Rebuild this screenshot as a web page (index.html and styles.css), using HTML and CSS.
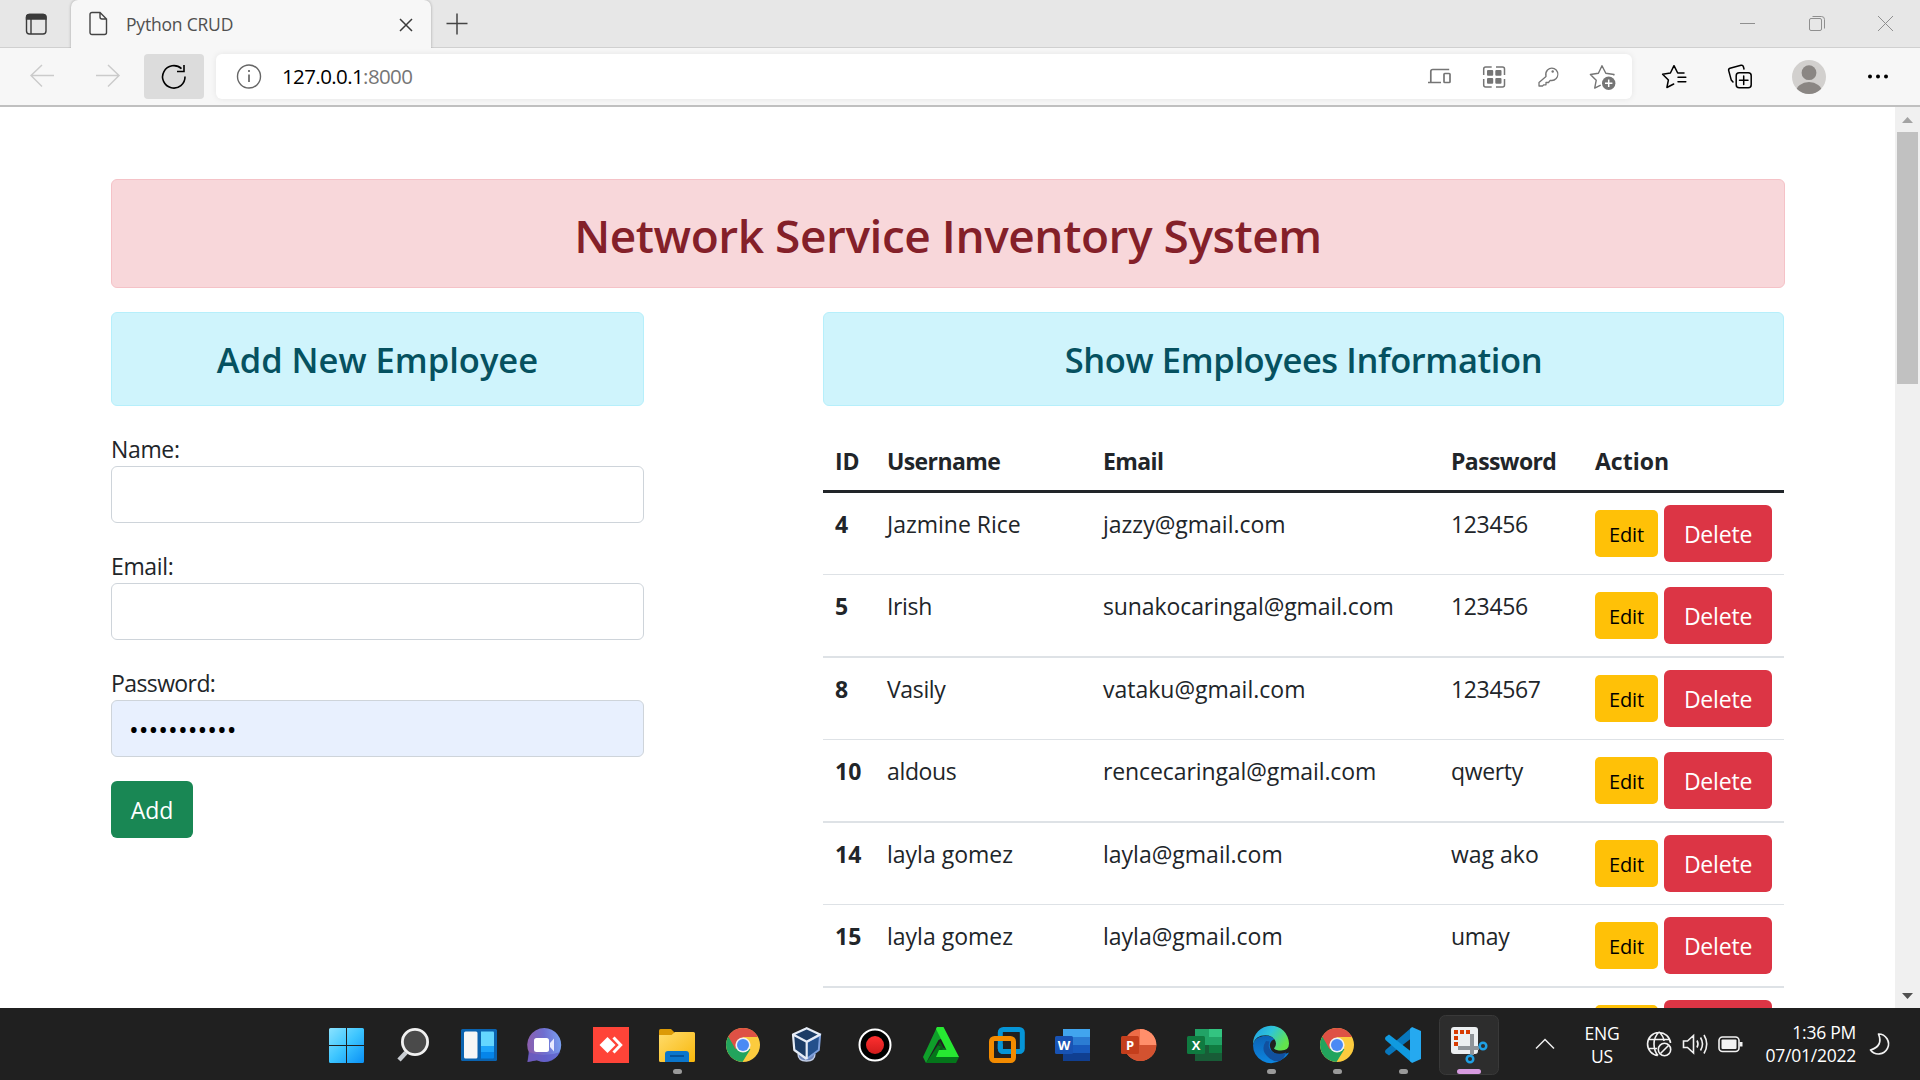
FILE: index.html
```html
<!DOCTYPE html>
<html lang="en">
<head>
<meta charset="utf-8">
<title>Python CRUD</title>
<link rel="stylesheet" href="styles.css">
</head>
<body>
<svg class="defs" aria-hidden="true">
  <defs>
    <linearGradient id="win" gradientUnits="userSpaceOnUse" x1="13" y1="20" x2="48" y2="55"><stop offset="0" stop-color="#8be3ff"/><stop offset=".5" stop-color="#3cc5ff"/><stop offset="1" stop-color="#0a90f5"/></linearGradient>
    <linearGradient id="chat" x1="0" y1="0.3" x2="1" y2="0.2"><stop offset="0" stop-color="#8b5fae"/><stop offset=".5" stop-color="#6f6fd0"/><stop offset="1" stop-color="#7aa2f2"/></linearGradient>
    <linearGradient id="folder" x1="0" y1="0" x2="1" y2="1"><stop offset="0" stop-color="#ffdc6c"/><stop offset="1" stop-color="#f8b70b"/></linearGradient>
    <linearGradient id="rec" x1="0" y1="0" x2="0" y2="1"><stop offset="0" stop-color="#ff3030"/><stop offset="1" stop-color="#d01c1c"/></linearGradient>
    <linearGradient id="edgeTop" x1="0" y1="0" x2="1" y2="0.5"><stop offset="0" stop-color="#1d9be8"/><stop offset=".5" stop-color="#2fc5d8"/><stop offset="1" stop-color="#62e34c"/></linearGradient>
    <linearGradient id="edgeBody" x1="0" y1="0" x2="0" y2="1"><stop offset="0" stop-color="#0c62b5"/><stop offset="1" stop-color="#0d86e0"/></linearGradient>
    <symbol id="chrome" viewBox="0 0 60 72">
      <circle cx="31" cy="37" r="17" fill="#fccb3e"/>
      <path d="M31 37 16.300 28.500A17 17 0 0 0 30.500 54L38.400 41.200Z" fill="#22a45d"/>
      <path d="M16.300 28.500A17 17 0 0 1 46 29H31L23.600 41.200Z" fill="#de5145"/>
      <circle cx="31" cy="37" r="7.600" fill="#f1f1f1"/><circle cx="31" cy="37" r="6" fill="#4a8af4"/>
    </symbol>
  </defs>
</svg>

<header class="tabstrip">
  <svg class="tab-actions" width="71" height="48" fill="none" stroke="#3b3b3b" stroke-width="1.400"><rect x="26.500" y="14.500" width="19.500" height="19.500" rx="3"/><path d="M26.500 19v-1.500a3 3 0 0 1 3-3h13.500a3 3 0 0 1 3 3V19z" fill="#3b3b3b"/><path d="M31 19v15"/></svg>
  <div class="tab">
    <svg class="tab-file" width="20" height="26" fill="none" stroke="#444" stroke-width="1.400"><path d="M3.500 1.500H11L17.500 8v13.500a2 2 0 0 1-2 2H3a2 2 0 0 1-2-2V3.500a2 2 0 0 1 2-2zM11 1.500V6a2 2 0 0 0 2 2h4.500"/></svg>
    <span class="tab-title">Python CRUD</span>
    <svg class="tab-close" width="14" height="14" stroke="#3b3b3b" stroke-width="1.500"><path d="M1 1l12 12M13 1 1 13"/></svg>
  </div>
  <svg class="new-tab" width="22" height="22" stroke="#444" stroke-width="1.500"><path d="M11 .5v21M.5 10.500h21"/></svg>
  <div class="window-buttons">
    <svg width="69" height="48"><path d="M27 23.500h15" stroke="#8f8f8f"/></svg>
    <svg width="69" height="48" fill="none" stroke="#8f8f8f"><rect x="27.500" y="18.500" width="12" height="12" rx="1.500"/><path d="M30.500 16.500h9a3 3 0 0 1 3 3v9"/></svg>
    <svg width="69" height="48" stroke="#8f8f8f"><path d="m27 16 15 15m0-15L27 31"/></svg>
  </div>
</header>

<nav class="toolbar">
  <svg class="nav-arrow" width="66" height="45" fill="none" stroke="#cbcbcb" stroke-width="1.500"><path d="M24 21.500H1M12 11 1 21.500 12 32.500"/></svg>
  <svg class="nav-arrow" width="48" height="45" fill="none" stroke="#cbcbcb" stroke-width="1.500"><path d="M0 21.500h23M12 11l11 10.500L12 32.500"/></svg>
  <div class="reload"><svg width="60" height="45" fill="none" stroke="#000" stroke-width="1.600"><path d="M41 22.500a11.200 11.200 0 1 1-3.500-7.800M40 11v6.500h-7"/></svg></div>
  <div class="address">
    <svg class="info" width="26" height="45" fill="none" stroke="#666" stroke-width="1.400"><circle cx="13" cy="22.500" r="11.500"/><path d="M13 20.500v7.500M13 16v2" stroke-width="1.700"/></svg>
    <span class="url"><span class="host">127.0.0.1</span><span class="port">:8000</span></span>
    <div class="address-icons">
      <svg viewBox="0 0 36 45" fill="none" stroke="#757575" stroke-width="1.700"><path d="M8.800 28V17.500a2 2 0 0 1 2-2h16.400M6 28.500h13"/><rect x="22" y="19.500" width="6" height="9" rx=".8"/></svg>
      <svg viewBox="0 0 36 45" fill="none" stroke="#757575" stroke-width="1.500"><path d="M7.700 21v-6a2 2 0 0 1 2-2h6M20 13h6.500a2 2 0 0 1 2 2v6M28.500 25v6a2 2 0 0 1-2 2H20M15.700 33h-6a2 2 0 0 1-2-2v-6"/><g fill="#757575" stroke="none"><rect x="11" y="16" width="6.200" height="5.800" rx="1"/><rect x="19.300" y="16" width="6.200" height="5.800" rx="1"/><rect x="11" y="24" width="6.200" height="5.800" rx="1"/><rect x="19.300" y="24" width="6.200" height="5.800" rx="1"/></g></svg>
      <svg viewBox="0 0 36 45" fill="none" stroke="#757575" stroke-width="1.300"><path d="M16 22.500a7 7 0 0 1 1.500-6.500 6.200 6.200 0 0 1 8.700 0 6.500 6.500 0 0 1 0 8.500 6.200 6.200 0 0 1-6 1.800L18.500 28.500H16v2.300h-2.200L12.500 32H9v-3.500z" stroke-linejoin="round"/><circle cx="22.700" cy="17.500" r="1.200" fill="#757575" stroke="none"/></svg>
      <svg viewBox="0 0 36 45" fill="none" stroke="#757575" stroke-width="1.400" stroke-linejoin="round"><path d="m29.500 21.500.5-1-8.200-1.200L18 11.700l-3.600 7.600-8 1.200 5.800 5.800-1.500 7.800 6-3"/><circle cx="24.700" cy="29.300" r="6.700" fill="#757575" stroke="none"/><path d="M21 29.300h7.400M24.700 25.600V33" stroke="#fff" stroke-width="1.500"/></svg>
    </div>
  </div>
  <div class="browser-icons">
    <svg viewBox="0 0 36 45" fill="none" stroke="#000" stroke-width="1.500" stroke-linejoin="round" stroke-linecap="round"><path d="M28 19h-6.300L18 11.700l-3.600 7.300-7.800 1.200 5.800 5.800-1.500 7.500 6.800-3.500M22 23.200h7.800M22 27.800h7.800"/></svg>
    <svg viewBox="0 0 36 45" fill="none" stroke="#000" stroke-width="1.500" stroke-linecap="round"><rect x="14.200" y="18.800" width="15" height="15" rx="3"/><path d="M21.700 22v8.500M17.500 26.300H26M22 15l-.6-2.300a2 2 0 0 0-2.400-1.400L8 14.200a2 2 0 0 0-1.300 2.400l2.600 9.500L11 28"/></svg>
    <svg class="avatar" viewBox="0 0 36 45"><clipPath id="av"><circle cx="18" cy="23" r="17"/></clipPath><circle cx="18" cy="23" r="17" fill="#d2d0ce"/><g clip-path="url(#av)" fill="#8a8683"><circle cx="18" cy="18.700" r="7.400"/><ellipse cx="18" cy="38" rx="13" ry="10"/></g></svg>
    <svg class="more" viewBox="0 0 36 45"><circle cx="10" cy="22.500" r="2"/><circle cx="18" cy="22.500" r="2"/><circle cx="26" cy="22.500" r="2"/></svg>
  </div>
</nav>

<div class="viewport">
  <main class="page">
    <h1 class="alert alert-danger">Network Service Inventory System</h1>
    <div class="columns">
      <section class="add">
        <h2 class="alert alert-info">Add New Employee</h2>
        <label>Name:</label>
        <div class="field"></div>
        <label>Email:</label>
        <div class="field"></div>
        <label class="tight">Password:</label>
        <div class="field filled">•••••••••••</div>
        <button class="btn btn-success">Add</button>
      </section>
      <section class="show">
        <h2 class="alert alert-info wide">Show Employees Information</h2>
        <table>
          <colgroup><col class="c-id"><col class="c-user"><col class="c-mail"><col class="c-pass"><col class="c-act"></colgroup>
          <thead><tr><th>ID</th><th class="tight">Username</th><th class="tight">Email</th><th class="tight">Password</th><th>Action</th></tr></thead>
          <tbody>
            <tr><th>4</th><td>Jazmine Rice</td><td>jazzy@gmail.com</td><td class="num">123456</td><td><div class="actions"><button class="btn btn-warning">Edit</button><button class="btn btn-danger">Delete</button></div></td></tr>
            <tr><th>5</th><td class="num">Irish</td><td class="long">sunakocaringal@gmail.com</td><td class="num">123456</td><td><div class="actions"><button class="btn btn-warning">Edit</button><button class="btn btn-danger">Delete</button></div></td></tr>
            <tr><th>8</th><td class="num">Vasily</td><td>vataku@gmail.com</td><td class="num">1234567</td><td><div class="actions"><button class="btn btn-warning">Edit</button><button class="btn btn-danger">Delete</button></div></td></tr>
            <tr><th>10</th><td class="num">aldous</td><td class="long">rencecaringal@gmail.com</td><td class="num">qwerty</td><td><div class="actions"><button class="btn btn-warning">Edit</button><button class="btn btn-danger">Delete</button></div></td></tr>
            <tr><th>14</th><td>layla gomez</td><td>layla@gmail.com</td><td>wag ako</td><td><div class="actions"><button class="btn btn-warning">Edit</button><button class="btn btn-danger">Delete</button></div></td></tr>
            <tr><th>15</th><td>layla gomez</td><td>layla@gmail.com</td><td class="num">umay</td><td><div class="actions"><button class="btn btn-warning">Edit</button><button class="btn btn-danger">Delete</button></div></td></tr>
            <tr><th></th><td></td><td></td><td></td><td><div class="actions"><button class="btn btn-warning"></button><button class="btn btn-danger"></button></div></td></tr>
          </tbody>
        </table>
      </section>
    </div>
  </main>
  <aside class="scrollbar">
    <svg width="25" height="25"><path d="M7 16h11l-5.500-6z" fill="#a3a3a3"/></svg>
    <div class="thumb"></div>
    <svg class="down" width="25" height="25"><path d="M7 10h11l-5.500 6z" fill="#505050"/></svg>
  </aside>
</div>

<footer class="taskbar">
  <div class="apps">
    <svg viewBox="0 0 60 72"><path d="M14.500 20H30v17H13V21.500A1.500 1.500 0 0 1 14.500 20zM31 20h15.500a1.500 1.500 0 0 1 1.500 1.500V37H31zM13 38h17v17H14.500a1.500 1.500 0 0 1-1.500-1.500zM31 38h17v15.500a1.500 1.500 0 0 1-1.500 1.500H31z" fill="url(#win)"/></svg>
    <svg viewBox="0 0 60 72"><path d="M24 44.500 17 52" stroke="#c9cdd2" stroke-width="4.500"/><circle cx="33" cy="34" r="12.600" fill="#4a4a4a" stroke="#f1f1f1" stroke-width="2.800"/></svg>
    <svg viewBox="0 0 60 72"><rect x="13" y="21" width="36" height="32" rx="1.500" fill="#0a63b0"/><rect x="16" y="23.500" width="13.500" height="27" rx="1.500" fill="#f6f6f6"/><path d="M33 23.500h12a1 1 0 0 1 1 1V38H33z" fill="#64d6ff"/><path d="M33 38h13v6H33z" fill="#1da4fa"/><path d="M33 44h13v5.500a1 1 0 0 1-1 1H33z" fill="#0585ea"/></svg>
    <svg viewBox="0 0 60 72"><path d="M30.300 20a17 17 0 1 1-7.500 32.300L13.500 54l1.700-9A17 17 0 0 1 30.300 20z" fill="url(#chat)"/><path d="M14.500 44q15 6 32 0Q40 54 31 54q-4 0-8-1.700L13.500 54z" fill="#5a57c6" opacity=".6"/><rect x="20" y="30" width="15" height="14" rx="2.500" fill="#fff"/><path d="m36 35 4-4.500v13L36 39z" fill="#e9ebff"/></svg>
    <svg viewBox="0 0 60 72"><path d="M13 19h36v36H13z" fill="#ff4438"/><path d="m19.500 37 8-8 8 8-8 8z" fill="#fff"/><path d="m33.500 29.500 7.200 7.500-7.200 7.500" fill="none" stroke="#fff" stroke-width="3"/></svg>
    <svg viewBox="0 0 60 72"><path d="M13 22.500a1.500 1.500 0 0 1 1.500-1.500H25l3.500 3.500V30H13z" fill="#dc9a06"/><path d="M13 27h12.500l3.500-3h18.500a1.500 1.500 0 0 1 1.500 1.500v27a1.500 1.500 0 0 1-1.500 1.500h-33a1.500 1.500 0 0 1-1.500-1.500z" fill="url(#folder)"/><path d="M19 54v-8a3 3 0 0 1 3-3h18a3 3 0 0 1 3 3v8z" fill="#0b76cc"/><path d="M24 48h14" stroke="#04498a" stroke-width="1.500"/><rect class="dot" x="27" y="61" width="9" height="5" rx="2.500"/></svg>
    <svg viewBox="0 0 60 72"><use href="#chrome"/></svg>
    <svg viewBox="0 0 60 72"><path d="M20 46q0 7 8.500 7t8.500-7" fill="#6f86b8" stroke="#c3cfe8" stroke-width="1.300"/><path d="m28.700 20 13.400 6.500-1.300 15.500-12.100 8.500L16.300 42 15 26.500z" fill="#1c3c66"/><path d="m28.700 34 13.400-7-1.300 15-12.100 9" fill="#23508c" stroke="#7d9fdb" stroke-width="2"/><path d="M28.700 51 16.300 42 15 26.500l13.700-6.300L42 26.500l-13.300 7.200L15 26.500M28.700 33.700V51" fill="none" stroke="#e6ecf6" stroke-width="2.200" stroke-linejoin="round"/></svg>
    <svg viewBox="0 0 60 72"><circle cx="31" cy="37" r="15.500" fill="#000" stroke="#fff" stroke-width="2"/><circle cx="31" cy="37" r="9" fill="url(#rec)"/></svg>
    <svg viewBox="0 0 60 72"><path d="M16 55h30l3-6-13-8-8-4z" fill="#04751a"/><path d="M27 19 13 49l3 6 12.500-23 4-2L33 19z" fill="#0f9f2a"/><path d="M27 19h6.500L49 49H26l3-7h7.500L26 21z" fill="#27e832"/><path d="m30 33.500-1.700 3.500L31 38l-2 4h3l1.500-2.500z" fill="#085c17"/></svg>
    <svg viewBox="0 0 60 72" fill="none" stroke-width="5"><rect x="24.300" y="21.500" width="22" height="22" rx="3" stroke="#0695d7"/><rect x="15.500" y="30.500" width="22" height="22" rx="3" stroke="#f38b00"/><path d="M24.300 36v4.500a3 3 0 0 0 3 3H34" stroke="#0695d7"/></svg>
    <svg viewBox="0 0 60 72"><path d="M21 21h27v8H21z" fill="#41a5ee"/><path d="M21 29h27v8H21z" fill="#2b7cd3"/><path d="M21 37h27v8H21z" fill="#185abd"/><path d="M21 45h27v8H21z" fill="#103f91"/><rect x="13" y="28" width="18" height="18" rx="1.500" fill="#1853b4"/><text x="22" y="41.500" class="office">W</text></svg>
    <svg viewBox="0 0 60 72"><circle cx="32.300" cy="37" r="16" fill="#ed6c47"/><path d="M32 21a16 16 0 0 1 16.300 16H32z" fill="#ff8f6b"/><path d="M16.300 37h32a16 16 0 0 1-32 0z" fill="#d35230"/><rect x="13" y="28" width="18" height="18" rx="1.500" fill="#c43e1c"/><text x="22" y="41.500" class="office">P</text></svg>
    <svg viewBox="0 0 60 72"><path d="M21 21h14v16H21z" fill="#21a366"/><path d="M35 21h13v8H35z" fill="#33c481"/><path d="M35 29h13v8H35z" fill="#21a366"/><path d="M35 37h13v8H35z" fill="#107c41"/><path d="M21 37h14v8h13v8H21z" fill="#185c37"/><rect x="13" y="28" width="18" height="18" rx="1.500" fill="#0f7a40"/><text x="22" y="41.500" class="office">X</text></svg>
    <svg viewBox="0 0 60 72"><path d="M13 37a18 18 0 0 0 28 15q6-3.500 8-7.500-7 4-13 1.500-7-3.500-6-10 1-4 5-5Q30 27 23 28q-9 2-10 9z" fill="url(#edgeBody)"/><path d="M26 33q-6 9 2 16 6 5.500 12 4 4-2.500 6-7.500.5-1.500-1-.8-5 2-10.500.3-8-4-5-11.500z" fill="#11509e"/><path d="M13 36a18 18 0 0 1 36-.5q0 7-8 7-5 0-7-2 2-2 2-5-.5-6-7.500-8Q16 26 13 36z" fill="url(#edgeTop)"/><rect class="dot" x="27" y="61" width="9" height="5" rx="2.500"/></svg>
    <svg viewBox="0 0 60 72"><use href="#chrome"/><rect class="dot" x="27" y="61" width="9" height="5" rx="2.500"/></svg>
    <svg viewBox="0 0 60 72"><path d="m39 20 2 9-24 18.500-3.500-2.500q-1-1.500 0-3z" fill="#0877bd"/><path d="m39 54 2-9-24-18.500-3.500 2.500q-1 1.500 0 3z" fill="#109ae0"/><path d="m40 19 9 4v28l-9 4-2-2V21z" fill="#25a9f0"/><rect class="dot" x="27" y="61" width="9" height="5" rx="2.500"/></svg>
    <svg viewBox="0 0 60 72"><rect x="1.500" y="7.500" width="59" height="59" rx="6" fill="#2d2d2d" stroke="#393939"/><rect x="13" y="19" width="27" height="27" rx="3" fill="#eceff1"/><path d="M16 22h4v4h-4zM22 22h4v4h-4zM28 22h4v4h-4zM16 28h4v4h-4zM16 34h4v4h-4z" fill="#d83b01"/><path d="M34 26v21M20 40h21" stroke="#8f9499" stroke-width="4"/><g fill="none" stroke="#1fa0e4" stroke-width="2.500"><circle cx="45" cy="38" r="3.300"/><circle cx="32" cy="51" r="3.300"/></g><rect x="19" y="61" width="24" height="5" rx="2.500" fill="#d79be0"/></svg>
  </div>
  <div class="tray">
    <svg class="chevron" width="20" height="12" fill="none" stroke="#eee" stroke-width="1.500"><path d="m1 10.500 9-9 9 9"/></svg>
    <div class="lang"><span>ENG</span><span>US</span></div>
    <svg class="status" width="100" height="30" fill="none" stroke="#f2f2f2" stroke-width="1.600"><path d="M24.500 14A11.500 11.500 0 1 0 12 26.500M13 3q-5 5-5 12t4 11.500M13 3q4.500 4 5 9M2 10.500h22M2 19.500h9"/><circle cx="18.500" cy="20.500" r="6.200"/><path d="m14.500 24.500 8-8M37.500 12v6.500h4l6 5.500V6.500l-6 5.500zM51 11.500q2 3.500 0 7M54.500 8.500q4 6.500 0 13M58 6q5.500 9 0 18.500"/><rect x="73" y="8" width="20" height="14.500" rx="3.500"/><rect x="75.500" y="10.500" width="15" height="9.500" rx="1" fill="#f2f2f2" stroke="none"/><path d="M95 13v4.500" stroke-width="3"/></svg>
    <div class="clock"><span>1:36 PM</span><span>07/01/2022</span></div>
    <svg class="moon" width="22" height="24" fill="none" stroke="#f2f2f2" stroke-width="1.700" stroke-linejoin="round"><path d="M9.500 2a10 10 0 1 1-8 16Q8 16 10 12t-.5-10z"/></svg>
  </div>
</footer>
</body>
</html>
```
FILE: styles.css
```css
* { box-sizing: border-box; }
body {
  margin: 0;
  width: 1920px;
  height: 1080px;
  overflow: hidden;
  display: flex;
  flex-direction: column;
  font-family: "Open Sans", "Noto Sans", sans-serif;
  font-size: 23px;
  line-height: 36px;
  color: #212529;
  background: #fff;
}
svg { display: block; flex: none; }
.defs { position: absolute; width: 0; height: 0; }

/* Browser chrome */
.tabstrip {
  height: 48px;
  flex: none;
  display: flex;
  align-items: flex-start;
  background: #e7e7e7;
  box-shadow: inset 0 -1px 0 #d0d0d0;
}
.tab {
  width: 360px;
  height: 48px;
  display: flex;
  align-items: center;
  padding: 0 18px;
  background: #f7f7f7;
  border-radius: 7px 7px 0 0;
  box-shadow: 0 0 3px rgba(0, 0, 0, .3);
  clip-path: inset(0 -4px 0 -4px);
}
.tab-title {
  margin: -1px 0 0 17px;
  font-size: 17.500px;
  letter-spacing: -.2px;
  line-height: 24px;
  color: #505050;
}
.tab-close { margin-left: auto; margin-top: 2px; }
.new-tab { margin: 13px 0 0 15px; }
.window-buttons { margin-left: auto; display: flex; }
.toolbar {
  height: 59px;
  flex: none;
  display: flex;
  padding: 6px 24px 0 30px;
  background: #f7f7f7;
  border-bottom: 2px solid #c0c0c0;
}
.reload { background: #dcdcdc; border-radius: 4px; width: 60px; height: 45px; }
.address {
  width: 1416px;
  height: 45px;
  margin-left: 12px;
  padding: 0 12px 0 20px;
  display: flex;
  align-items: center;
  background: #fff;
  border-radius: 6px;
  box-shadow: 0 0 6px rgba(0, 0, 0, .08);
}
.url { margin: -2px 0 0 20px; font-size: 20.500px; letter-spacing: -.6px; color: #767676; }
.host { color: #000; }
.address-icons { margin-left: auto; display: flex; gap: 18px; }
.address-icons svg, .browser-icons svg { width: 36px; height: 45px; }
.browser-icons { display: flex; margin-left: 24px; gap: 30px; }
.avatar { margin-left: 3px; }
.more { margin-left: 3px; }

/* Page */
.viewport { height: 901px; flex: none; display: flex; overflow: hidden; }
.page { flex: 1; padding: 72px 110px 0 111px; }
.alert {
  margin: 0 0 24px;
  text-align: center;
  font-weight: 600;
  border: 1px solid;
  border-radius: 6px;
}
.alert-danger {
  height: 109px;
  line-height: 111px;
  font-size: 46px;
  letter-spacing: -.45px;
  color: #842029;
  background: #f8d7da;
  border-color: #f5c2c7;
}
.alert-info {
  height: 94px;
  line-height: 94px;
  font-size: 34.500px;
  color: #055160;
  background: #cff4fc;
  border-color: #b6effb;
}
.wide { letter-spacing: -.38px; }
.columns { display: flex; justify-content: space-between; }
.add { width: 533px; }
.show { width: 961px; margin-right: 1px; }
label { display: block; height: 36px; padding-top: 1px; letter-spacing: -.35px; }
.tight { letter-spacing: -.6px; }
.num { letter-spacing: -.35px; }
.long { letter-spacing: -.1px; }
.field {
  height: 57px;
  margin-bottom: 24px;
  padding: 0 17px;
  border: 1px solid #ced4da;
  border-radius: 6px;
  line-height: 57px;
}
.filled { background: #e8f0fe; color: #000; font-size: 26px; }
.btn {
  display: block;
  border: 0;
  padding: 0;
  font-family: inherit;
  font-size: 23px;
  text-align: center;
  border-radius: 6px;
}
.btn-success { width: 82px; height: 57px; background: #198754; color: #fff; }
.btn-warning {
  width: 63px;
  height: 47px;
  padding-top: 1px;
  background: #ffc107;
  color: #000;
  font-size: 20px;
  letter-spacing: -.1px;
  border-radius: 5px;
}
.btn-danger {
  width: 108px;
  height: 57px;
  padding-top: 1px;
  background: #dc3545;
  color: #fff;
  letter-spacing: -.2px;
}
table { width: 961px; table-layout: fixed; border-collapse: separate; border-spacing: 0; }
.c-id { width: 52px; }
.c-user { width: 216px; }
.c-mail { width: 348px; }
.c-pass { width: 144px; }
.c-act { width: 201px; }
th, td { text-align: left; vertical-align: top; padding: 13px 0 0 12px; white-space: nowrap; }
td:last-child { padding-top: 12px; }
thead th { height: 63px; padding-top: 13px; border-bottom: 3px solid #212529; }
tbody th, tbody td { height: 82px; border-bottom: 1px solid #dee2e6; }
tbody tr:nth-child(even) > * { height: 83px; border-bottom-width: 2px; }
.actions { display: flex; align-items: center; gap: 6px; }

/* Scrollbar */
.scrollbar { width: 25px; background: #f0f0f0; display: flex; flex-direction: column; }
.thumb { width: 21px; height: 252px; margin-left: 2px; background: #c1c1c1; }
.down { margin-top: auto; }

/* Taskbar */
.taskbar { height: 72px; flex: none; display: flex; background: #202020; padding-left: 316px; }
.apps { display: flex; gap: 6px; }
.apps svg { width: 60px; height: 72px; overflow: visible; }
.dot { fill: #9a9a9a; }
.office { font: bold 13px "Open Sans", sans-serif; fill: #fff; text-anchor: middle; }
.tray { display: flex; color: #fff; font-size: 17.500px; line-height: 23px; letter-spacing: -.25px; }
.chevron { margin: 30px 0 0 37px; }
.lang { width: 60px; margin: 14px 0 0 17px; display: flex; flex-direction: column; align-items: center; }
.status { margin: 21px 0 0 14px; }
.clock { width: 110px; margin-top: 13px; display: flex; flex-direction: column; align-items: flex-end; }
.moon { margin: 24px 0 0 13px; }
```
